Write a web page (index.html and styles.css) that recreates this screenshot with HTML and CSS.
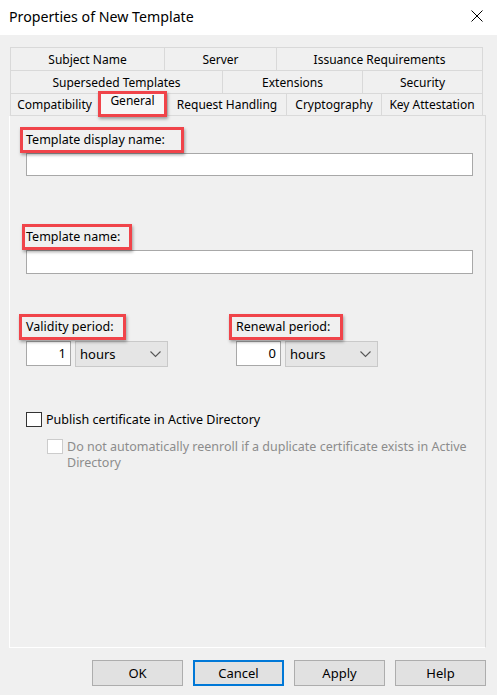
FILE: index.html
```html
<!DOCTYPE html>
<html>
<head>
    <meta charset="UTF-8">
    <title>Properties of New Template</title>
    <link rel="stylesheet" href="styles.css">
</head>
<body>

<div class="window">
    <div class="titlebar">
        <span class="title">Properties of New Template</span>
        <svg class="close" width="12" height="12" viewBox="0 0 12 12">
            <path d="M0.5 0.5 L11.5 11.5 M11.5 0.5 L0.5 11.5" stroke="#000" stroke-width="1" fill="none"/>
        </svg>
    </div>

    <div class="content">
        <div class="tabs">
            <div class="tab-row">
                <div class="tab w154">Subject Name</div>
                <div class="tab w112">Server</div>
                <div class="tab w207 last">Issuance Requirements</div>
            </div>
            <div class="tab-row">
                <div class="tab w212">Superseded Templates</div>
                <div class="tab w140">Extensions</div>
                <div class="tab w121 last">Security</div>
            </div>
            <div class="tab-row front">
                <div class="tab w88">Compatibility</div>
                <div class="tab w69 active"><span class="mark mark-tab"></span>General</div>
                <div class="tab w119">Request Handling</div>
                <div class="tab w95">Cryptography</div>
                <div class="tab w102 last">Key Attestation</div>
            </div>
        </div>

        <div class="panel">
            <div class="field">
                <span class="label marked m-display">Template display name:</span>
                <div class="textbox wide"></div>
            </div>

            <div class="field gap-big">
                <span class="label marked m-name">Template name:</span>
                <div class="textbox wide tall"></div>
            </div>

            <div class="periods">
                <div class="period">
                    <span class="label marked m-validity">Validity period:</span>
                    <div class="period-inputs">
                        <div class="textbox num">1</div>
                        <div class="combo">hours
                            <svg width="11" height="7" viewBox="0 0 11 7"><path d="M0.5 0.5 L5.5 5.5 L10.5 0.5" stroke="#555" stroke-width="1.1" fill="none"/></svg>
                        </div>
                    </div>
                </div>
                <div class="period">
                    <span class="label marked m-renewal">Renewal period:</span>
                    <div class="period-inputs">
                        <div class="textbox num">0</div>
                        <div class="combo">hours
                            <svg width="11" height="7" viewBox="0 0 11 7"><path d="M0.5 0.5 L5.5 5.5 L10.5 0.5" stroke="#555" stroke-width="1.1" fill="none"/></svg>
                        </div>
                    </div>
                </div>
            </div>

            <div class="check">
                <span class="box"></span>
                <span>Publish certificate in Active Directory</span>
            </div>
            <div class="check sub disabled">
                <span class="box"></span>
                <span class="check-text">Do not automatically reenroll if a duplicate certificate exists in Active Directory</span>
            </div>
        </div>

        <div class="buttons">
            <div class="btn">OK</div>
            <div class="btn default">Cancel</div>
            <div class="btn">Apply</div>
            <div class="btn">Help</div>
        </div>
    </div>
</div>

</body>
</html>
```

FILE: styles.css
```css
*{ margin: 0; padding: 0; box-sizing: border-box;}
body { background: #f0f0f0; font-family: "Noto Sans", "Liberation Sans", Arial, sans-serif; font-size: 12px; color: #000;}
.window { width: 497px; height: 695px; background: #f0f0f0; display: flex; flex-direction: column; overflow: hidden;}

.titlebar { height: 35px; background: #fff; display: flex; align-items: center; justify-content: space-between; padding: 0 14px 0 9px; flex-shrink: 0;}
.title { font-size: 14.2px; margin-top: -3px;}
.close { margin-top: -3px;}

.content { flex: 1; padding: 12px 11px 0 9px; display: flex; flex-direction: column;}

.tabs { margin-left: 1px; width: 473px;}
.tab-row { display: flex; height: 23px;}
.tab-row.front { height: 22px; position: relative; z-index: 2;}
.tab { height: 100%; border-top: 1px solid #d9d9d9; border-left: 1px solid #d9d9d9; display: flex; align-items: center; justify-content: center; white-space: nowrap; background: #f0f0f0; line-height: 16px; padding-top: 1px;}
.tab.last { border-right: 1px solid #d9d9d9;}
.tab.active { position: relative; height: 25px; margin-top: -2px; background: #f7f7f7; border-right: 1px solid #d9d9d9; padding: 0 0 6px;}
.w154 { width: 154px;} .w112 { width: 112px;} .w207 { width: 207px;}
.w212 { width: 212px;} .w140 { width: 140px;} .w121 { width: 121px;}
.w88 { width: 88px;} .w69 { width: 69px;} .w119 { width: 119px;} .w95 { width: 95px;} .w102 { width: 102px;}

.panel { width: 477px; height: 533px; border: 1px solid #fff; border-right-color: #dadada; border-top-color: #dadada; background: #f0f0f0; padding: 16px 14px 0 16px; position: relative; z-index: 1;}

.field { display: flex; flex-direction: column; align-items: flex-start;}
.gap-big { margin-top: 53px;}
.label { display: inline-block; line-height: 16px; height: 16px; margin-bottom: 5px; font-size: 12.5px;}
.textbox { background: #fff; border: 1px solid #a8a8a8; height: 23px;}
.textbox.wide { width: 447px;}
.textbox.tall { height: 24px;}

/* red annotation frames laid over the labels */
.marked { position: relative;}
.marked::after { content: ""; position: absolute; border: 3px solid #f0444a; box-shadow: 1px 2px 3px rgba(0,0,0,.35); top: -5px; bottom: -5px;}
.m-display::after { left: -6px; right: -19px;}
.m-name::after { left: -4px; right: -12px;}
.m-validity::after { left: -7px; right: -12px;}
.m-renewal::after { left: -7px; right: -13px;}
.mark-tab { position: absolute; left: -1px; top: -1px; width: 69px; height: 26px; border: 3px solid #f0444a; box-shadow: 1px 2px 3px rgba(0,0,0,.35);}

.periods { display: flex; margin-top: 45px;}
.period { width: 210px; display: flex; flex-direction: column; align-items: flex-start;}
.period .label { margin-bottom: 6px;}
.period-inputs { display: flex; gap: 4px;}
.textbox.num { width: 45px; height: 25px; text-align: right; padding-right: 4px; line-height: 22px; font-size: 13px;}
.combo { width: 93px; height: 26px; background: #e5e5e5; border: 1px solid #c9c9c9; display: flex; align-items: center; justify-content: space-between; padding: 0 6px 0 4px; font-size: 13px;}

.check { display: flex; align-items: flex-start; gap: 4px; margin-top: 45px; line-height: 16px; font-size: 12.5px;}
.check .box { width: 16px; height: 15px; border: 1px solid #333; background: #fff; flex-shrink: 0;}
.check.sub { margin-top: 11px; margin-left: 21px; color: #8c8c8c;}
.check.disabled .box { border-color: #cccccc;}
.check-text { width: 400px;}

.buttons { display: flex; justify-content: flex-end; gap: 10px; margin-top: 12px;}
.btn { width: 91px; height: 26px; background: #e1e1e1; border: 1px solid #adadad; display: flex; align-items: center; justify-content: center; font-size: 13px;}
.btn.default { border: 2px solid #0078d7;}
```
